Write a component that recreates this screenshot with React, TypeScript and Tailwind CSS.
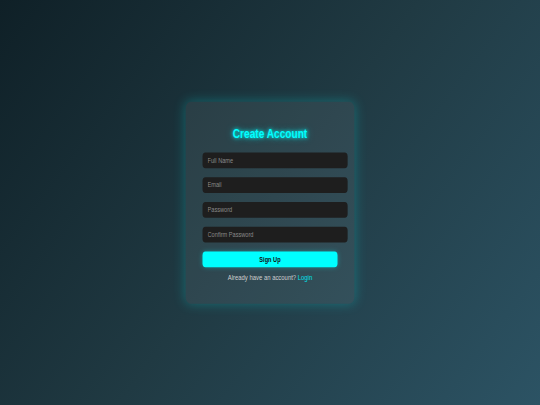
import React from "react";

export default function App() {
  return (
    <div className="w-[540px] h-[405px] overflow-hidden">
      <div
        className="w-[1280px] h-[720px] origin-top-left scale-x-[0.421875] scale-y-[0.5625] flex items-center justify-center bg-[linear-gradient(135deg,#0f2027_0%,#203a43_50%,#2c5364_100%)]"
        style={{ fontFamily: '"Liberation Sans", Arial, sans-serif' }}
      >
        <div className="w-[400px] px-[40px] pt-[42px] pb-[38px] rounded-[12px] bg-[rgba(255,255,255,0.07)] shadow-[0_0_25px_rgba(0,255,255,0.25)] flex flex-col">
          <h2 className="text-center text-[24px] leading-[28px] font-bold text-[#00ffff] [text-shadow:0_0_8px_#00ffff,0_0_16px_rgba(0,255,255,0.5)] mb-[20px]">
            Create Account
          </h2>
          <div className="flex flex-col gap-[16px]">
            {["Full Name", "Email", "Password", "Confirm Password"].map((p) => (
              <input
                key={p}
                type={p.includes("Password") ? "password" : "text"}
                placeholder={p}
                className="w-[344px] h-[28px] px-[12px] rounded-[7px] bg-[#1e1e1e] text-[13.333px] text-[#ddd] placeholder:text-[#8a8a8a] outline-none border-0"
              />
            ))}
            <button className="w-full h-[28px] rounded-[7px] bg-[#00ffff] text-[13.333px] font-bold text-[#111] shadow-[0_0_10px_rgba(0,255,255,0.35)]">
              Sign Up
            </button>
          </div>
          <p className="mt-[7px] text-center text-[14px] leading-[20px] text-[#cfcfcf]">
            Already have an account? <span className="text-[#00e0e8]">Login</span>
          </p>
        </div>
      </div>
    </div>
  );
}
